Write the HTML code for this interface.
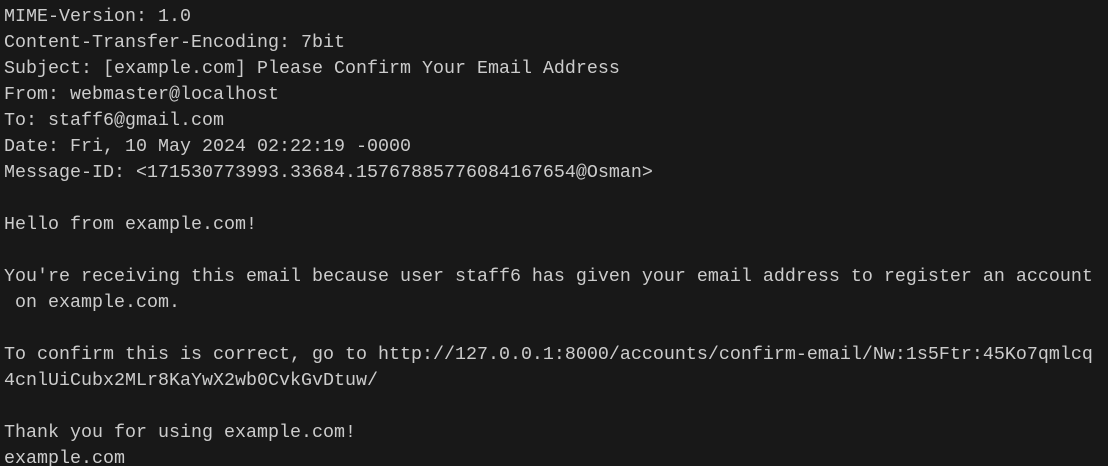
<!DOCTYPE html>
<html><head><meta charset="utf-8"><style>
html,body{margin:0;padding:0;background:#181818;width:1108px;height:466px;overflow:hidden}
pre{margin:0;padding:4px 0 0 4px;font-family:"Liberation Mono",monospace;font-size:18.33px;line-height:26px;color:#cccccc}
</style></head><body><pre>MIME-Version: 1.0
Content-Transfer-Encoding: 7bit
Subject: [example.com] Please Confirm Your Email Address
From: webmaster@localhost
To: staff6@gmail.com
Date: Fri, 10 May 2024 02:22:19 -0000
Message-ID: &lt;171530773993.33684.15767885776084167654@Osman&gt;

Hello from example.com!

You're receiving this email because user staff6 has given your email address to register an account
 on example.com.

To confirm this is correct, go to http://127.0.0.1:8000/accounts/confirm-email/Nw:1s5Ftr:45Ko7qmlcq
4cnlUiCubx2MLr8KaYwX2wb0CvkGvDtuw/

Thank you for using example.com!
example.com</pre></body></html>
